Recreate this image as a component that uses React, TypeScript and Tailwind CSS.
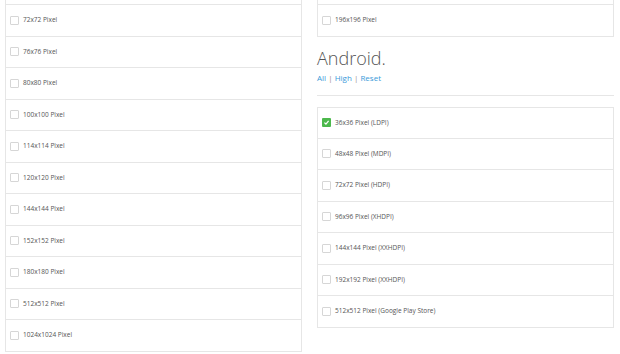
import React from "react";

const iosSizes = ["72x72", "76x76", "80x80", "100x100", "114x114", "120x120", "144x144", "152x152", "180x180", "512x512", "1024x1024"];

const androidSizes = [
  { label: "36x36 Pixel (LDPI)", checked: true },
  { label: "48x48 Pixel (MDPI)", checked: false },
  { label: "72x72 Pixel (HDPI)", checked: false },
  { label: "96x96 Pixel (XHDPI)", checked: false },
  { label: "144x144 Pixel (XXHDPI)", checked: false },
  { label: "192x192 Pixel (XXHDPI)", checked: false },
  { label: "512x512 Pixel (Google Play Store)", checked: false },
];

const Checkbox = ({ checked }: { checked?: boolean }) =>
  checked ? (
    <span className="w-[9px] h-[9px] rounded-[1px] bg-[#4cb84c] flex items-center justify-center shrink-0">
      <svg width="7" height="7" viewBox="0 0 10 10">
        <path d="M2 5.2 L4.2 7.2 L8 2.8" fill="none" stroke="#fff" strokeWidth="1.8" />
      </svg>
    </span>
  ) : (
    <span className="w-[9px] h-[9px] rounded-[1px] border border-[#d6d6d6] bg-white shrink-0" />
  );

const Row = ({ label, checked, first }: { label: string; checked?: boolean; first?: boolean }) => (
  <label
    className={`flex items-center gap-[4px] h-[31.5px] pl-[4px] border-x border-b border-[#e6e6e6] ${first ? "border-t" : ""}`}
  >
    <Checkbox checked={checked} />
    <span className="text-[6.5px] text-[#555]">{label}</span>
  </label>
);

// the list continues above the fold; only its lower edge shows
const Clipped = () => <div className="h-[31.5px] border-x border-b border-[#e6e6e6]" />;

export default function App() {
  return (
    <div
      className="w-[620px] h-[354px] overflow-hidden bg-white flex gap-[15px] px-[5px]"
      style={{ fontFamily: '"Open Sans", sans-serif' }}
    >
      <div className="w-[297px] -mt-[26.5px] flex flex-col">
        <Clipped />
        {iosSizes.map((s) => (
          <Row key={s} label={`${s} Pixel`} />
        ))}
      </div>

      <div className="w-[297px] -mt-[26.5px] flex flex-col">
        <Clipped />
        <Row label="196x196 Pixel" />

        <h2 className="mt-[9.5px] text-[18px] leading-[24px] font-light text-[#555]">Android.</h2>
        <div className="mt-[2px] text-[8px] leading-[12px] text-[#3a9ad9]">
          <a href="#">All</a> <span className="text-[#a09090]">|</span> <a href="#">High</a>{" "}
          <span className="text-[#a09090]">|</span> <a href="#">Reset</a>
        </div>
        <hr className="mt-[11px] border-t border-[#e6e6e6]" />

        <div className="mt-[11px] flex flex-col">
          {androidSizes.map((a, i) => (
            <Row key={a.label} label={a.label} checked={a.checked} first={i === 0} />
          ))}
        </div>
      </div>
    </div>
  );
}
